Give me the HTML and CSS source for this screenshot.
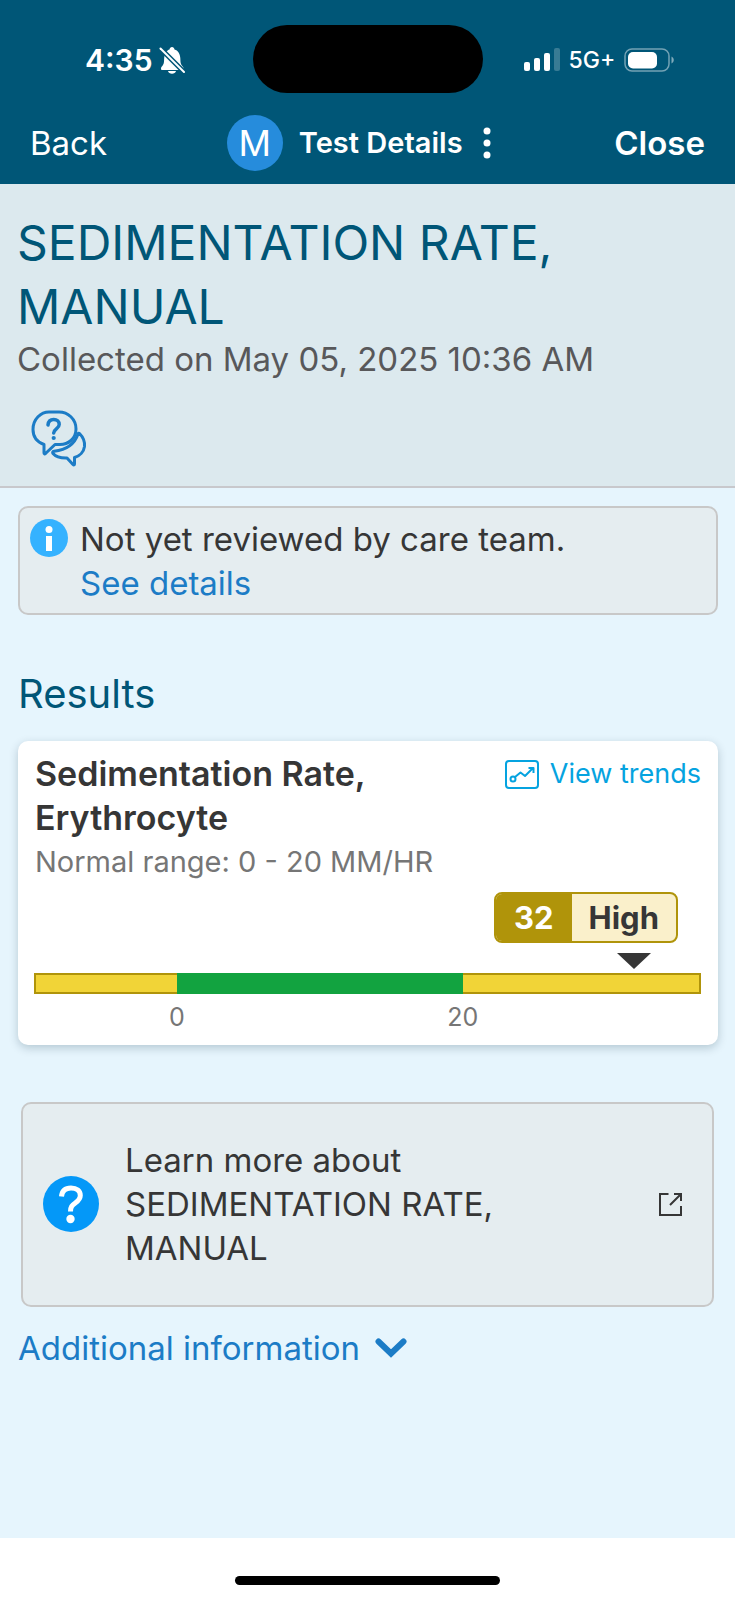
FILE: index.html
```html
<!DOCTYPE html>
<html lang="en">
<head>
<meta charset="utf-8">
<meta name="viewport" content="width=device-width, initial-scale=1">
<title>Test Details</title>
<link rel="stylesheet" href="styles.css">
</head>
<body>
<div class="app">
  <header class="top">
    <div class="status">
      <div class="status-left">
        <span class="time">4:35</span>
        <svg class="bell" viewBox="0 0 26 28" aria-hidden="true">
          <path fill="#fff" d="M2 22.500c0-1.500 1-2 2-3.500 1.200-1.800 1-4 1.200-7C5.600 7.500 8 4 10.500 3.400 10.700 2 11.700 1 13 1s2.300 1 2.500 2.400C19 4.300 21 7.500 21.300 12c.2 3 0 5 1.200 7 1 1.500 2 2 2 3.500 0 1-.8 1.500-1.700 1.500H3.200C2.500 24 2 23.500 2 22.500z"/>
          <path fill="#fff" d="M9 25h8c-.5 1.700-2 2.700-4 2.700S9.500 26.700 9 25z"/>
          <path stroke="#005677" stroke-width="5" d="M1 2l24 24"/>
          <path stroke="#fff" stroke-width="2" stroke-linecap="round" d="M1.500 2.500l23.500 23.500"/>
        </svg>
      </div>
      <div class="island"></div>
      <div class="status-right">
        <svg class="signal" viewBox="0 0 36 24" aria-hidden="true">
          <g fill="#fff"><rect x="0" y="14" width="6" height="9" rx="2"/><rect x="10" y="10" width="6" height="13" rx="2"/><rect x="20" y="5" width="6" height="18" rx="2"/><rect x="30" y="0" width="6" height="23" rx="2" opacity=".22"/></g>
        </svg>
        <span class="network">5G+</span>
        <svg class="battery" viewBox="0 0 50 24" aria-hidden="true">
          <rect x="1" y="1" width="44" height="22" rx="7" fill="none" stroke="#fff" stroke-opacity=".45" stroke-width="1.500"/>
          <rect x="4" y="4" width="29" height="16.500" rx="5" fill="#fff"/>
          <path d="M47.500 8.500c3 1.500 3 5.500 0 7z" fill="#fff" opacity=".5"/>
        </svg>
      </div>
    </div>
    <nav class="nav">
      <button class="nav-btn" type="button">Back</button>
      <div class="nav-title">
        <span class="avatar">M</span>
        <h2 class="nav-name">Test Details</h2>
        <button class="more" type="button" aria-label="More options">
          <svg viewBox="0 0 8 32" aria-hidden="true"><g fill="#fff"><circle cx="4" cy="4" r="3.500"/><circle cx="4" cy="16" r="3.500"/><circle cx="4" cy="28" r="3.500"/></g></svg>
        </button>
      </div>
      <button class="nav-btn nav-close" type="button">Close</button>
    </nav>
  </header>

  <section class="intro">
    <h1 class="title">SEDIMENTATION RATE, MANUAL</h1>
    <p class="collected">Collected on May 05, 2025 10:36 AM</p>
    <button class="ask" type="button" aria-label="Ask a question">
      <svg viewBox="0 0 56 57" fill="none" stroke="#1c7cc6" stroke-width="3" stroke-linejoin="round" stroke-linecap="round" aria-hidden="true">
        <path d="M13 34.500C6 32 2 26.500 2 19.500 2 9 10 2 18 2h10c9 0 17 7 17 17 0 10-8 15.500-16 15.500h-5L14.500 43.500c-.8.700-1.500.3-1.500-.5z"/>
        <path d="M48.500 23.500c3.500 3.500 5.500 8 5 13-.7 5-4.500 9.500-10 11v6.500c0 1-.7 1.300-1.500.5L36 48c-6 .2-11-1-14-4.500-.8-1-.3-2 1-2.200C34 40 43 36 47 24c.3-1 1-1 1.500-.5z"/>
        <path stroke-width="3.500" d="M17 15c.3-3.500 2.500-5.500 5.700-5.500 3.300 0 5.500 2 5.500 5 0 4-5.200 4-5.500 8.500"/>
        <circle cx="22.700" cy="28" r="2.100" fill="#1c7cc6" stroke="none"/>
      </svg>
    </button>
  </section>

  <main class="content">
    <div class="notice">
      <svg class="info" viewBox="0 0 38 38" aria-hidden="true"><circle cx="19" cy="19" r="19" fill="#35b2ff"/><circle cx="19" cy="10.500" r="3.500" fill="#fff"/><path fill="#fff" d="M16 17h6v15h-6z"/></svg>
      <div>
        <p class="line">Not yet reviewed by care team.</p>
        <a class="link" href="#details">See details</a>
      </div>
    </div>

    <h2 class="heading">Results</h2>

    <section class="card">
      <div class="card-head">
        <h3 class="component">Sedimentation Rate, Erythrocyte</h3>
        <a class="trends" href="#trends">
          <svg viewBox="0 0 34 29" fill="none" stroke="#05a3e0" stroke-width="2" stroke-linejoin="round" aria-hidden="true">
            <rect x="1" y="1" width="32" height="27" rx="3"/>
            <circle cx="8" cy="19" r="2.500"/><path d="M10 17l5.500-4.500 4.500 3.500 8-8M23.500 8h5v5"/>
          </svg>
          <span>View trends</span>
        </a>
      </div>
      <p class="range">Normal range: 0 - 20 MM/HR</p>
      <div class="reading"><strong class="pill"><span class="value">32</span><span class="level">High</span></strong></div>
      <div class="pointer-row" style="padding-left:90%"><svg class="pointer" viewBox="0 0 34 16" aria-hidden="true"><path d="M0 0h34L17 16z" fill="#363636"/></svg></div>
      <div class="bar"><span class="out"></span><span class="normal"></span><span class="out out-high"></span></div>
      <div class="ticks"><span>0</span><span>20</span></div>
    </section>

    <a class="learn" href="#learn">
      <svg class="question" viewBox="0 0 56 56" aria-hidden="true"><circle cx="28" cy="28" r="28" fill="#0498f8"/><path d="M18.500 20.500c.5-5.500 4-8.500 9.500-8.500 5.700 0 9.300 3 9.300 7.500 0 3.800-2.200 5.500-5 7.500-3.300 2.300-4.800 3.800-4.800 8.500" fill="none" stroke="#fff" stroke-width="5"/><circle cx="27.500" cy="43" r="4.200" fill="#fff"/></svg>
      <span class="learn-text">Learn more about SEDIMENTATION RATE, MANUAL</span>
      <svg class="external" viewBox="0 0 23 23" fill="none" stroke="#363636" stroke-width="2" aria-hidden="true"><path d="M9.500 1H1v21h21v-9M15 1h7v7M22 1L11 12"/></svg>
    </a>

    <button class="additional" type="button">
      <span>Additional information</span>
      <svg viewBox="0 0 32 20" fill="none" stroke="#1c7cc6" stroke-width="6" stroke-linecap="round" aria-hidden="true"><path d="M3.500 3.500L16 15.500 28.500 3.500"/></svg>
    </button>
  </main>

  <footer class="home"><div class="home-bar"></div></footer>
</div>
</body>
</html>
```
FILE: styles.css
```css
* { box-sizing: border-box; }
body { margin: 0; font-family: Inter, "Liberation Sans", sans-serif; font-size: 33px; line-height: 44px; color: #363636; }
h1, h2, h3, p { margin: 0; font-weight: 400; }
button { padding: 0; border: 0; background: none; font: inherit; color: inherit; cursor: pointer; }
a { text-decoration: none; color: inherit; }
svg { display: block; flex: none; }

.app { min-height: 100vh; display: flex; flex-direction: column; background: #e6f5fd; }

.top { background: #005677; color: #fff; padding-top: 25px; }
.status { display: grid; grid-template-columns: 1fr 230px 1fr; align-items: center; }
.island { height: 68px; border-radius: 34px; background: #000; }
.status-left { display: flex; align-items: center; justify-content: flex-end; gap: 6px; padding: 2px 68px 0 0; }
.time { font-size: 30px; font-weight: 600; }
.bell { width: 26px; height: 28px; }
.status-right { display: flex; align-items: center; gap: 9px; padding: 2px 0 0 41px; }
.signal { width: 36px; height: 24px; }
.network { font-size: 23px; font-weight: 500; }
.battery { width: 50px; height: 24px; }

.nav { display: flex; justify-content: space-between; align-items: center; padding: 22px 30px 13px; }
.nav-close { font-weight: 600; }
.nav-title { display: flex; align-items: center; gap: 16px; }
.avatar { width: 56px; height: 56px; border-radius: 50%; background: #268cdc; font-size: 36px; line-height: 56px; text-align: center; }
.nav-name { font-size: 29px; font-weight: 600; }
.more { padding: 0 4px; }
.more svg { width: 8px; height: 32px; }

.intro { padding: 27px 17px 19px; background: #dce9ee; border-bottom: 2px solid #c8c8cc; }
.title { font-size: 48px; line-height: 64px; color: #005677; margin-bottom: -2px; }
.collected { color: #58585a; margin-bottom: 29px; }
.ask { display: block; margin-left: 14px; }
.ask svg { width: 56px; height: 57px; }

.content { flex: 1; padding: 18px 17px 18px 18px; }
.notice { display: flex; gap: 12px; padding: 9px 10px 8px; border: 2px solid #c8c8c8; border-radius: 10px; background: #e5edf0; }
.info { width: 38px; height: 38px; margin-top: 2px; }
.link { display: block; color: #1c7cc6; }
.heading { margin: 54px 0 22px; font-size: 40px; line-height: 50px; color: #005677; }

.card { padding: 11px 17px 16px 16px; border-radius: 10px; background: #fff; box-shadow: 0 3px 10px rgba(0, 40, 60, 0.22); }
.card-head { display: flex; justify-content: space-between; align-items: flex-start; gap: 16px; padding-left: 1px; }
.component { flex: 1; max-width: 400px; font-size: 34px; font-weight: 600; }
.trends { display: flex; align-items: center; gap: 11px; font-size: 27px; color: #05a3e0; }
.trends svg { width: 34px; height: 29px; }
.range { padding-left: 1px; font-size: 29px; color: #767676; margin-bottom: 8px; }
.reading { display: flex; justify-content: flex-end; padding-right: 23px; }
.pill { display: flex; border: 2px solid #b0940a; border-radius: 8px; overflow: hidden; font-size: 31px; line-height: 47px; font-weight: 700; background: #faf0cb; }
.value { padding: 0 18px; background: #b0940a; color: #fff; }
.level { padding: 0 17px; }
.pointer-row { padding-top: 10px; }
.pointer { width: 34px; height: 16px; margin-left: -17px; }
.bar { display: grid; grid-template-columns: 3fr 6fr 5fr; height: 21px; margin: 4px 0 11px; }
.out { background: #f1d437; border: 2px solid #b0940a; border-right: 0; }
.out-high { border-right: 2px solid #b0940a; border-left: 0; }
.normal { background: #12a340; }
.ticks { display: grid; grid-template-columns: 6fr 6fr 2fr; font-size: 25px; line-height: 24px; text-align: center; color: #767676; }

.learn { display: flex; align-items: center; margin: 57px 4px 19px 3px; padding: 34px 30px 35px 20px; border: 2px solid #c8c8c8; border-radius: 10px; background: #e5edf0; }
.question { width: 56px; height: 56px; }
.learn-text { flex: 1; max-width: 420px; margin: 0 auto 0 26px; }
.external { width: 23px; height: 23px; }

.additional { display: flex; align-items: center; gap: 15px; color: #1c7cc6; }
.additional svg { width: 32px; height: 20px; }

.home { display: flex; justify-content: center; padding: 38px 0 15px; background: #fff; }
.home-bar { width: 36%; height: 9px; border-radius: 5px; background: #000; }
```
